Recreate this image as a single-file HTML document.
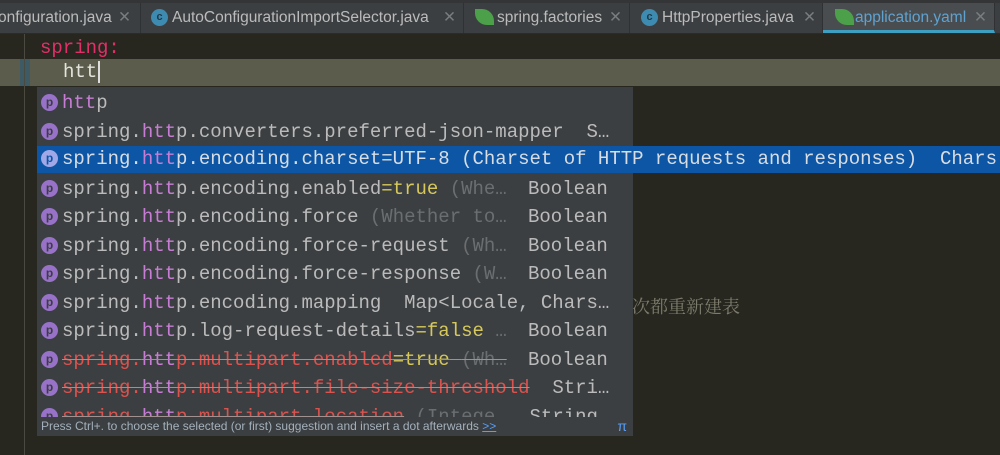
<!DOCTYPE html>
<html><head><meta charset="utf-8"><style>
*{margin:0;padding:0;box-sizing:border-box}
body{width:1000px;height:455px;overflow:hidden;background:#27271f;position:relative;font-family:"Liberation Mono","Courier New",monospace}
.tabs{position:absolute;left:0;top:0;width:1000px;height:34px;background:#3c3f41;border-top:3px solid #333537;border-bottom:1px solid #2b2b2b;font-family:"Liberation Sans",sans-serif;font-size:15.5px;color:#bbbbbb}
.tab{position:absolute;top:0;height:30px;line-height:30px;border-right:1px solid #2f3133;white-space:nowrap;overflow:hidden}
.x{color:#7a7d80;position:absolute;top:0}
.ci{position:absolute;top:6px;width:17px;height:17px;border-radius:50%;background:#3d8bb0;color:#1f3a4a;font-size:11px;line-height:17px;text-align:center;font-weight:bold}
.leaf{position:absolute;top:6px;width:19px;height:16px;background:#4da04a;border-radius:0 12px 0 12px}
.line{position:absolute;left:0;top:59px;width:1000px;height:27px;background:#5c5c4c}
.mark{position:absolute;left:20px;top:59px;width:10px;height:27px;background:#3e5a64}
.gl{position:absolute;left:24px;top:34px;width:1px;height:421px;background:#4a4a40}
.code{position:absolute;font-size:19px;line-height:27px;white-space:pre}
.pop{position:absolute;left:37px;top:87px;width:596px;height:349px;background:#3c3f41;overflow:hidden}
.row{position:absolute;left:0;height:28.5px;line-height:28.5px;font-size:19px;color:#bbbbbb;white-space:pre;width:580px}
.p{display:inline-block;width:17px;height:17px;border-radius:50%;background:#9872c8;color:#3c3f41;font-size:12px;line-height:17px;text-align:center;vertical-align:2px;margin:0 4px 0 4px;font-family:"Liberation Sans",sans-serif;font-weight:bold}
.h{color:#c77dd4}
.g{color:#6b6e70}
.y{color:#d6c85c}
.r{color:#d9534f;text-decoration:line-through;text-decoration-color:#a09090}
.t{position:absolute;left:491px}
.sel{position:absolute;left:37px;top:146px;width:963px;height:27px;background:#0d56a6;z-index:5}
.selt{z-index:6}
.sb{position:absolute;left:584px;top:0;width:12px;height:349px;background:#3c3f41}
.th{position:absolute;left:586px;top:0;width:8px;height:252px;background:#595b5d}
.hint{position:absolute;left:0;top:330px;width:596px;height:19px;background:#3c3f41;font-family:"Liberation Sans",sans-serif;font-size:12px;color:#a3b0bb;line-height:19px;padding-left:4px}
</style></head><body>
<div class="tabs">
 <div class="tab" style="left:0;width:141px"><span style="position:absolute;left:-2px">onfiguration.java</span><span class="x" style="left:118px">✕</span></div>
 <div class="tab" style="left:141px;width:323px"><span class="ci" style="left:10px">c</span><span style="position:absolute;left:31px">AutoConfigurationImportSelector.java</span><span class="x" style="left:302px">✕</span></div>
 <div class="tab" style="left:464px;width:166px"><span class="leaf" style="left:11px"></span><span style="position:absolute;left:33px">spring.factories</span><span class="x" style="left:145px">✕</span></div>
 <div class="tab" style="left:630px;width:193px"><span class="ci" style="left:11px">c</span><span style="position:absolute;left:32px">HttpProperties.java</span><span class="x" style="left:173px">✕</span></div>
 <div class="tab" style="left:823px;width:172px;background:#4a4d50;border-bottom:3px solid #3e9fc1"><span class="leaf" style="left:12px"></span><span style="position:absolute;left:32px;color:#5fa2d0">application.yaml</span><span class="x" style="left:151px">✕</span></div>
</div>
<div class="line"></div>
<div class="mark"></div>
<div class="gl"></div>
<div class="code" style="left:40px;top:35px;color:#e0306a">spring:</div>
<div class="code" style="left:63px;top:59px;color:#e4e4dc">htt<span style="border-left:2px solid #ddd;margin-left:1px"></span></div>
<div class="code" style="left:632px;top:293px;color:#7d7b6c;font-family:'Noto Serif CJK SC',serif;font-size:18px">次都重新建表</div>
<div class="pop">
 <div class="row" style="top:2px"><span class="p">p</span><span class="h">htt</span>p</div>
 <div class="row" style="top:30.5px"><span class="p">p</span>spring.<span class="h">htt</span>p.converters.preferred-json-mapper  S…</div>
 <div class="row" style="top:87.5px"><span class="p">p</span>spring.<span class="h">htt</span>p.encoding.enabled<span class="y">=true</span> <span class="g">(Whe…</span><span class="t">Boolean</span></div>
 <div class="row" style="top:116px"><span class="p">p</span>spring.<span class="h">htt</span>p.encoding.force <span class="g">(Whether to…</span><span class="t">Boolean</span></div>
 <div class="row" style="top:144.5px"><span class="p">p</span>spring.<span class="h">htt</span>p.encoding.force-request <span class="g">(Wh…</span><span class="t">Boolean</span></div>
 <div class="row" style="top:173px"><span class="p">p</span>spring.<span class="h">htt</span>p.encoding.force-response <span class="g">(W…</span><span class="t">Boolean</span></div>
 <div class="row" style="top:201.5px"><span class="p">p</span>spring.<span class="h">htt</span>p.encoding.mapping  Map&lt;Locale, Chars…</div>
 <div class="row" style="top:230px"><span class="p">p</span>spring.<span class="h">htt</span>p.log-request-details<span class="y">=false</span> <span class="g">…</span><span class="t">Boolean</span></div>
 <div class="row" style="top:258.5px"><span class="p">p</span><span class="r">spring.<span class="h">htt</span>p.multipart.enabled<span class="y">=true</span> <span class="g">(Wh…</span></span><span class="t">Boolean</span></div>
 <div class="row" style="top:287px"><span class="p">p</span><span class="r">spring.<span class="h">htt</span>p.multipart.file-size-threshold</span>  Stri…</div>
 <div class="row" style="top:315.5px"><span class="p">p</span><span class="r">spring.<span class="h">htt</span>p.multipart.location</span> <span class="g">(Intege…</span>  String</div>
 <div class="sb"><div class="th"></div></div>
 <div class="hint">Press Ctrl+. to choose the selected (or first) suggestion and insert a dot afterwards  <u style="color:#589df6">&gt;&gt;</u><span style="position:absolute;right:6px;color:#589df6;font-size:14px">π</span></div>
</div>
<div class="sel"></div>
<div class="code selt" style="left:37px;top:146px;font-size:19px;line-height:27px;color:#d8dde3"><span class="p" style="background:#a0a8e8;color:#0d56a6">p</span>spring.<span class="h">htt</span>p.encoding.charset=UTF-8 (Charset of HTTP requests and responses)  Chars</div>
</body></html>
